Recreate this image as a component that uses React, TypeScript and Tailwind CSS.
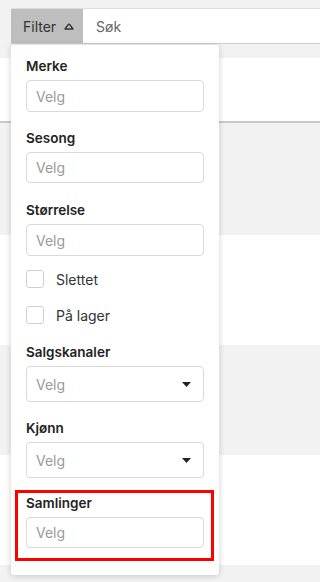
import React from "react";

const font = { fontFamily: "Inter, 'Noto Sans', sans-serif" };

function Label({ children }: { children: React.ReactNode }) {
  return (
    <div className="h-[18px] leading-[18px] text-[13.5px] font-semibold text-[#222]">{children}</div>
  );
}

function TextInput({ h = "h-[32px]" }: { h?: string }) {
  return (
    <div className={`${h} mt-[5px] w-[178px] rounded-[4px] border border-[#d9d9d9] bg-white flex items-center pl-[9px] text-[14px] text-[#9a9a9a]`}>
      Velg
    </div>
  );
}

function SelectInput() {
  return (
    <div className="h-[36px] mt-[5px] w-[178px] rounded-[4px] border border-[#d9d9d9] bg-white flex items-center justify-between pl-[9px] pr-[12px] text-[14px] text-[#9a9a9a]">
      <span>Velg</span>
      <svg width="9" height="5" viewBox="0 0 9 5">
        <path d="M0 0 L9 0 L4.5 5 Z" fill="#222" />
      </svg>
    </div>
  );
}

function Check({ label }: { label: string }) {
  return (
    <div className="flex items-center h-[18px]">
      <div className="w-[18px] h-[18px] rounded-[3px] border border-[#cfcfcf] bg-white" />
      <span className="ml-[12px] text-[14px] text-[#333]">{label}</span>
    </div>
  );
}

export default function App() {
  return (
    <div className="relative w-full h-[582px] overflow-hidden bg-[#f2f2f2]" style={font}>
      <div className="pt-[8px] pl-[11px]">
        <div className="flex h-[36px] border-t border-[#dedede] border-b border-b-[#cdcdcd] bg-white">
          <div className="w-[72px] bg-[#bebebe] flex items-center pl-[12px] text-[14px] text-[#333]">
            Filter
            <svg className="ml-[8px]" width="10" height="7" viewBox="0 0 10 7">
              <path d="M1 6 L4.2 1.6 Q5 0.6 5.8 1.6 L9 6 Z" fill="none" stroke="#333" strokeWidth="1.4" strokeLinejoin="round" />
            </svg>
          </div>
          <div className="flex items-center pl-[13px] text-[14px] text-[#666]">Søk</div>
        </div>
      </div>
      <div className="mt-[14px]">
        <div className="h-[65px] bg-white border-b-2 border-[#c9c9c9]" />
        <div className="h-[112px]" />
        <div className="h-[110px] bg-white" />
        <div className="h-[110px]" />
        <div className="h-[110px] bg-white" />
      </div>

      <div className="absolute left-[11px] top-[45px] w-[208px] h-[530px] bg-white rounded-[3px] shadow-[0_1px_6px_rgba(0,0,0,0.18)] pl-[15px] pt-[12px]">
        <Label>Merke</Label>
        <TextInput />
        <div className="mt-[17px]" />
        <Label>Sesong</Label>
        <TextInput h="h-[31px]" />
        <div className="mt-[18px]" />
        <Label>Størrelse</Label>
        <TextInput />
        <div className="mt-[14px]" />
        <Check label="Slettet" />
        <div className="mt-[18px]" />
        <Check label="På lager" />
        <div className="mt-[19px]" />
        <Label>Salgskanaler</Label>
        <SelectInput />
        <div className="mt-[17px]" />
        <Label>Kjønn</Label>
        <SelectInput />
        <div className="mt-[12px] -ml-[11px] w-[199px] border-[3px] border-[#ff0000] pl-[8px] pt-[1px] pb-[10px]">
          <Label>Samlinger</Label>
          <TextInput h="h-[31px]" />
        </div>
      </div>
    </div>
  );
}
